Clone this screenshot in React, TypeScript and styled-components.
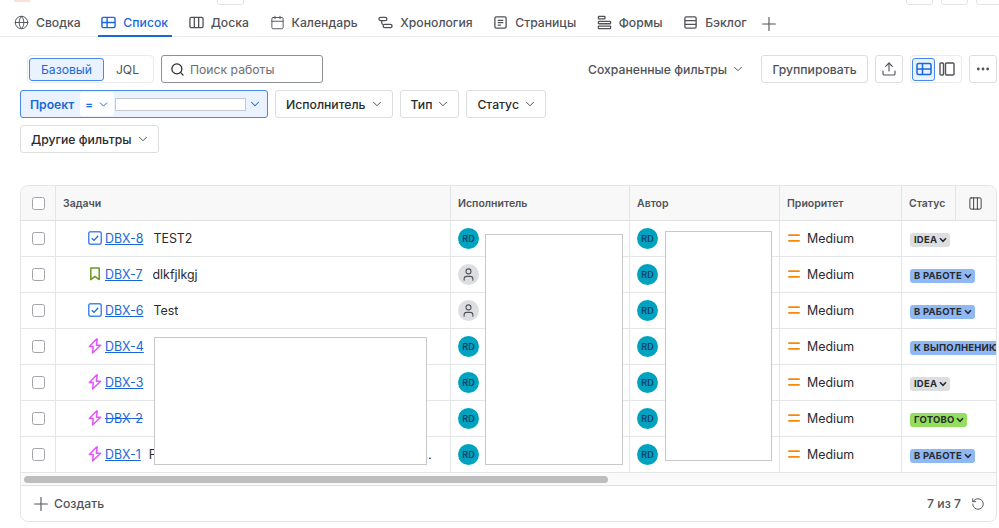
import React from "react";
import styled, { createGlobalStyle } from "styled-components";
import { ChevronDown, Columns3, Globe, Plus, RotateCcw, Search, Upload, User, Calendar, Ellipsis } from "lucide-react";

const GlobalStyle = createGlobalStyle`
  html, body { margin: 0; padding: 0; background: #fff; }
  body { font-family: Inter, "Noto Sans", sans-serif; color: #292a2e; overflow: hidden; }
  * { box-sizing: border-box; }
`;

const TableIcon = ({ size = 15 }: { size?: number }) => (
  <svg width={size} height={size} viewBox="0 0 16 16" fill="none" stroke="currentColor" strokeWidth="1.5">
    <rect x="1" y="2.5" width="14" height="11" rx="1.5" />
    <path d="M1 8h14M6.5 2.5v11" />
  </svg>
);
const BoardIcon = () => (
  <svg width="15" height="15" viewBox="0 0 16 16" fill="none" stroke="currentColor" strokeWidth="1.4">
    <rect x="1" y="2.5" width="14" height="11" rx="1.5" />
    <path d="M5.7 2.5v11M10.3 2.5v11" />
  </svg>
);
const TimelineIcon = () => (
  <svg width="15" height="15" viewBox="0 0 16 16" fill="none" stroke="currentColor" strokeWidth="1.4">
    <rect x="1" y="2.5" width="8.5" height="3.5" rx="1.7" />
    <rect x="5.5" y="10" width="9.5" height="3.5" rx="1.7" />
    <path d="M4 6v2.5a1.5 1.5 0 0 0 1.5 1.5" />
  </svg>
);
const PagesIcon = () => (
  <svg width="15" height="15" viewBox="0 0 16 16" fill="none" stroke="currentColor" strokeWidth="1.4">
    <rect x="2" y="2" width="12" height="12" rx="1.5" />
    <path d="M5 5.7h6M5 8.2h6M5 10.7h3.5" />
  </svg>
);
const FormsIcon = () => (
  <svg width="15" height="15" viewBox="0 0 16 16" fill="none" stroke="currentColor" strokeWidth="1.4">
    <rect x="1.5" y="1.5" width="7" height="2.6" rx=".6" />
    <rect x="1.5" y="6.7" width="13" height="2.6" rx=".6" />
    <rect x="1.5" y="11.9" width="13" height="2.6" rx=".6" />
  </svg>
);
const BacklogIcon = () => (
  <svg width="15" height="15" viewBox="0 0 16 16" fill="none" stroke="currentColor" strokeWidth="1.4">
    <rect x="2" y="2" width="12" height="12" rx="1.5" />
    <path d="M2 6h12M2 10h12" />
  </svg>
);
const PanelIcon = () => (
  <svg width="16" height="16" viewBox="0 0 16 16" fill="none" stroke="currentColor" strokeWidth="1.4">
    <rect x="1" y="2" width="3.5" height="12" rx="1" />
    <rect x="6.5" y="2" width="8.5" height="12" rx="1" />
  </svg>
);
const TaskIcon = () => (
  <svg width="14" height="14" viewBox="0 0 14 14" fill="none">
    <rect x=".75" y=".75" width="12.5" height="12.5" rx="2" stroke="#4688ec" strokeWidth="1.5" />
    <path d="M3.8 7.2l2.2 2.2 4.2-4.6" stroke="#1868db" strokeWidth="1.3" />
  </svg>
);
const StoryIcon = () => (
  <svg width="14" height="14" viewBox="0 0 14 14" fill="none">
    <path d="M2.8 1h8.4v11.6L7 9.4l-4.2 3.2z" stroke="#6a9a23" strokeWidth="1.5" strokeLinejoin="round" />
  </svg>
);
const EpicIcon = () => (
  <svg width="14" height="16" viewBox="0 0 14 16" fill="none">
    <path d="M8.6 1L1.4 8.6h3.8L4.6 15l8-7.8H8.4L9.2 1z" stroke="#e056f5" strokeWidth="1.5" strokeLinejoin="round" />
  </svg>
);
const MediumIcon = () => (
  <svg width="12" height="10" viewBox="0 0 12 10" fill="none">
    <path d="M.8 2.2h10.4M.8 7.8h10.4" stroke="#f68909" strokeWidth="1.7" strokeLinecap="round" />
  </svg>
);
const TinyChevron = () => (
  <svg width="8" height="6" viewBox="0 0 8 6" fill="none">
    <path d="M1 1.3l3 3 3-3" stroke="#292a2e" strokeWidth="1.6" />
  </svg>
);

const tabs = [
  { name: "Сводка", icon: <Globe size={15} strokeWidth={1.5} /> },
  { name: "Список", icon: <TableIcon />, active: true },
  { name: "Доска", icon: <BoardIcon /> },
  { name: "Календарь", icon: <Calendar size={15} strokeWidth={1.5} /> },
  { name: "Хронология", icon: <TimelineIcon /> },
  { name: "Страницы", icon: <PagesIcon /> },
  { name: "Формы", icon: <FormsIcon /> },
  { name: "Бэклог", icon: <BacklogIcon /> },
];

const statusColors: Record<string, string> = {
  idea: "#dddee1",
  progress: "#8fb8f6",
  done: "#94de5e",
};

const rows = [
  { key: "DBX-8", title: "TEST2", type: "task", assigned: true, status: "IDEA", tone: "idea" },
  { key: "DBX-7", title: "dlkfjlkgj", type: "story", assigned: false, status: "В РАБОТЕ", tone: "progress" },
  { key: "DBX-6", title: "Test", type: "task", assigned: false, status: "В РАБОТЕ", tone: "progress" },
  { key: "DBX-4", title: "", type: "epic", assigned: true, status: "К ВЫПОЛНЕНИЮ", tone: "progress" },
  { key: "DBX-3", title: "", type: "epic", assigned: true, status: "IDEA", tone: "idea" },
  { key: "DBX-2", title: "", type: "epic", assigned: true, status: "ГОТОВО", tone: "done", struck: true },
  { key: "DBX-1", title: "Реализовать загрузку данных из внешнего отчета", type: "epic", assigned: true, status: "В РАБОТЕ", tone: "progress", tight: true },
];

const typeIcons: Record<string, React.ReactNode> = {
  task: <TaskIcon />,
  story: <StoryIcon />,
  epic: <EpicIcon />,
};

export default function App() {
  return (
    <Page>
      <GlobalStyle />
      <TopStrip>
        <TopLogo />
        <TopGhost />
        <TopSpacer />
        <TopGhost />
        <TopGhost />
        <TopGhost />
      </TopStrip>

      <Tabs>
        {tabs.map((t) => (
          <Tab key={t.name} $active={t.active}>
            {t.icon}
            <span>{t.name}</span>
          </Tab>
        ))}
        <AddTab><Plus size={22} strokeWidth={1.2} /></AddTab>
      </Tabs>

      <Filters>
        <ToolRow>
          <Segment>
            <SegmentItem $active>Базовый</SegmentItem>
            <SegmentItem>JQL</SegmentItem>
          </Segment>
          <SearchBox>
            <Search size={15} strokeWidth={2} color="#292a2e" />
            <span>Поиск работы</span>
          </SearchBox>
          <Spacer />
          <SavedFilters>
            Сохраненные фильтры <ChevronDown size={14} strokeWidth={1.6} />
          </SavedFilters>
          <ToolButton $wide>Группировать</ToolButton>
          <ToolButton><Upload size={16} strokeWidth={1.7} /></ToolButton>
          <ViewSwitch>
            <ViewOption $active><TableIcon size={16} /></ViewOption>
            <ViewOption><PanelIcon /></ViewOption>
          </ViewSwitch>
          <ToolButton><Ellipsis size={16} strokeWidth={2.2} /></ToolButton>
        </ToolRow>

        <FilterRow>
          <ProjectFilter>
            <strong>Проект</strong>
            <Operator>= <ChevronDown size={13} strokeWidth={1.8} /></Operator>
            <ProjectValue />
            <ChevronDown size={14} strokeWidth={1.8} />
          </ProjectFilter>
          <FilterButton>Исполнитель <ChevronDown size={14} strokeWidth={1.7} /></FilterButton>
          <FilterButton>Тип <ChevronDown size={14} strokeWidth={1.7} /></FilterButton>
          <FilterButton>Статус <ChevronDown size={14} strokeWidth={1.7} /></FilterButton>
        </FilterRow>
        <FilterRow>
          <FilterButton>Другие фильтры <ChevronDown size={14} strokeWidth={1.7} /></FilterButton>
        </FilterRow>
      </Filters>

      <TableCard>
        <HeadRow>
          <HeadCell $center><CheckBox /></HeadCell>
          <HeadCell>Задачи</HeadCell>
          <HeadCell>Исполнитель</HeadCell>
          <HeadCell>Автор</HeadCell>
          <HeadCell>Приоритет</HeadCell>
          <StatusHead>
            <span>Статус</span>
            <ColumnsButton><Columns3 size={15} strokeWidth={1.4} /></ColumnsButton>
          </StatusHead>
        </HeadRow>

        {rows.map((r) => (
          <Row key={r.key}>
            <Cell $center><CheckBox /></Cell>
            <IssueCell>
              {typeIcons[r.type]}
              <IssueKey $struck={r.struck}>{r.key}</IssueKey>
              <IssueTitle $tight={r.tight}>{r.title}</IssueTitle>
            </IssueCell>
            <Cell>
              {r.assigned ? <Avatar>RD</Avatar> : <EmptyAvatar><User size={15} strokeWidth={1.7} /></EmptyAvatar>}
            </Cell>
            <Cell><Avatar>RD</Avatar></Cell>
            <PriorityCell><MediumIcon /> Medium</PriorityCell>
            <StatusCell>
              <StatusBadge $tone={r.tone}>{r.status} <TinyChevron /></StatusBadge>
            </StatusCell>
          </Row>
        ))}

        <ScrollTrack><ScrollThumb /></ScrollTrack>

        <Footer>
          <CreateButton><Plus size={22} strokeWidth={1.2} /> Создать</CreateButton>
          <Counter>7 из 7 <RotateCcw size={14} strokeWidth={1.6} /></Counter>
        </Footer>

        <TitleMask />
        <AssigneeMask />
        <AuthorMask />
      </TableCard>
    </Page>
  );
}

const Page = styled.div`
  width: 999px;
  height: 528px;
  overflow: hidden;
  font-size: 12.2px;
`;

const TopStrip = styled.div`
  height: 5px;
  display: flex;
  align-items: flex-end;
  padding-left: 217px;
  position: relative;
  overflow: hidden;
`;
const TopLogo = styled.div`
  position: absolute;
  left: 14px;
  top: -6px;
  width: 16px;
  height: 8px;
  background: #fde1d8;
`;
const TopGhost = styled.div`
  width: 27px;
  height: 20px;
  margin-right: 8px;
  border: 1px solid #e2e3e5;
  border-radius: 3px;
  flex: none;
`;
const TopSpacer = styled.div`
  width: 654px;
  flex: none;
`;

const Tabs = styled.nav`
  height: 32px;
  display: flex;
  padding-left: 11px;
  border-bottom: 1.5px solid #e9eaeb;
`;
const Tab = styled.div<{ $active?: boolean }>`
  height: 31.5px;
  padding: 6px 4px 0 3px;
  margin-right: 13.6px;
  display: flex;
  align-items: center;
  gap: 7px;
  font-weight: 500;
  color: ${(p) => (p.$active ? "#1868db" : "#505258")};
  border-bottom: ${(p) => (p.$active ? "2.5px solid #1868db" : "2.5px solid transparent")};
  & > svg { flex: none; }
`;
const AddTab = styled.div`
  display: flex;
  align-items: center;
  padding-top: 6px;
  color: #505258;
  margin-left: -6px;
`;

const Filters = styled.div`
  padding: 18px 2px 0 20px;
  display: flex;
  flex-direction: column;
  gap: 7px;
`;
const ToolRow = styled.div`
  height: 28px;
  padding-left: 7px;
  display: flex;
  align-items: center;
  gap: 7px;
`;
const Segment = styled.div`
  width: 127px;
  height: 28px;
  padding: 2px 2px 2px 1px;
  display: flex;
  align-items: center;
  border: 1px solid #e9eaeb;
  border-radius: 4px;
`;
const SegmentItem = styled.div<{ $active?: boolean }>`
  flex: ${(p) => (p.$active ? "0 0 75px" : "1")};
  height: 23px;
  display: flex;
  align-items: center;
  justify-content: center;
  border-radius: 3px;
  color: ${(p) => (p.$active ? "#1868db" : "#505258")};
  background: ${(p) => (p.$active ? "#e9f2fe" : "transparent")};
  border: ${(p) => (p.$active ? "1px solid #4688ec" : "0")};
`;
const SearchBox = styled.div`
  width: 162px;
  height: 28px;
  padding-left: 8px;
  display: flex;
  align-items: center;
  gap: 5px;
  color: #6b6e76;
  border: 1px solid #8c8f97;
  border-radius: 3px;
`;
const Spacer = styled.div`
  flex: 1;
`;
const SavedFilters = styled.div`
  display: flex;
  align-items: center;
  gap: 4px;
  margin-right: 9px;
  font-weight: 500;
  color: #505258;
  & > svg { flex: none; }
`;
const ToolButton = styled.div<{ $wide?: boolean }>`
  width: ${(p) => (p.$wide ? "107px" : "28px")};
  height: 28px;
  display: flex;
  align-items: center;
  justify-content: center;
  font-weight: 500;
  color: #505258;
  border: 1px solid #dcdddf;
  border-radius: 3px;
`;
const ViewSwitch = styled.div`
  width: 52px;
  height: 28px;
  padding: 2px 2px 2px 1px;
  display: flex;
  align-items: center;
  border: 1px solid #e9eaeb;
  border-radius: 4px;
`;
const ViewOption = styled.div<{ $active?: boolean }>`
  flex: ${(p) => (p.$active ? "0 0 23px" : "1")};
  height: 23px;
  display: flex;
  align-items: center;
  justify-content: center;
  border-radius: 3px;
  color: ${(p) => (p.$active ? "#1868db" : "#505258")};
  background: ${(p) => (p.$active ? "#e9f2fe" : "transparent")};
  border: ${(p) => (p.$active ? "1px solid #4688ec" : "0")};
`;

const FilterRow = styled.div`
  display: flex;
  gap: 7px;
`;
const FilterButton = styled.div`
  height: 28px;
  padding: 0 8px 0 10px;
  display: flex;
  align-items: center;
  gap: 4px;
  font-weight: 500;
  color: #292a2e;
  background: #fff;
  border: 1px solid #dcdddf;
  border-radius: 3px;
  & > svg { flex: none; color: #505258; }
`;
const ProjectFilter = styled.div`
  width: 248px;
  height: 28px;
  padding-left: 9px;
  display: flex;
  align-items: center;
  color: #1868db;
  background: #e9f2fe;
  border: 1px solid #4688ec;
  border-radius: 3px;
  & > strong { font-weight: 600; width: 50px; flex: none; }
  & > svg { flex: none; margin-left: 2px; }
`;
const Operator = styled.div`
  width: 34px;
  height: 24px;
  padding-left: 5px;
  display: flex;
  align-items: center;
  gap: 4px;
  font-weight: 500;
  background: #fff;
  border-radius: 3px;
  & > svg { flex: none; }
`;
const ProjectValue = styled.div`
  width: 131px;
  height: 13px;
  margin-left: 1px;
  background: #fff;
  border: 1px solid #c7c8cb;
`;

const TableCard = styled.div`
  position: relative;
  width: 977px;
  height: 337px;
  margin: 32px 0 0 20px;
  border: 1px solid #e4e5e7;
  border-radius: 8px;
  overflow: hidden;
`;
const columns = "35px 395px 179px 150px 122px 1fr";
const HeadRow = styled.div`
  height: 35px;
  display: grid;
  grid-template-columns: ${columns};
  background: #f8f8f8;
  border-bottom: 1px solid #dfe0e2;
`;
const Row = styled.div`
  height: 36px;
  display: grid;
  grid-template-columns: ${columns};
  border-bottom: 1px solid #e4e5e7;
`;
const HeadCell = styled.div<{ $center?: boolean }>`
  display: flex;
  align-items: center;
  justify-content: ${(p) => (p.$center ? "center" : "flex-start")};
  padding: ${(p) => (p.$center ? "0" : "0 7px")};
  font-size: 10.5px;
  font-weight: 600;
  color: #505258;
  border-right: 1px solid #e4e5e7;
`;
const StatusHead = styled.div`
  display: flex;
  align-items: center;
  padding-left: 7px;
  font-size: 10.5px;
  font-weight: 600;
  color: #505258;
  & > span { width: 46px; }
`;
const ColumnsButton = styled.div`
  width: 43px;
  align-self: stretch;
  display: flex;
  align-items: center;
  justify-content: center;
  margin-left: auto;
  color: #292a2e;
  border-left: 1px solid #e4e5e7;
  & > svg { margin-right: 3px; }
`;
const Cell = styled.div<{ $center?: boolean }>`
  min-width: 0;
  display: flex;
  align-items: center;
  justify-content: ${(p) => (p.$center ? "center" : "flex-start")};
  padding: ${(p) => (p.$center ? "0" : "0 7px")};
  border-right: 1px solid #e4e5e7;
`;
const IssueCell = styled(Cell)`
  padding: 0 18px 1px 32px;
  gap: 0;
  & > svg { flex: none; }
`;
const IssueKey = styled.span<{ $struck?: boolean }>`
  margin-left: 3px;
  font-size: 12.4px;
  color: #1868db;
  text-decoration: ${(p) => (p.$struck ? "line-through" : "underline")};
  white-space: nowrap;
`;
const IssueTitle = styled.span<{ $tight?: boolean }>`
  margin-left: ${(p) => (p.$tight ? "8px" : "10px")};
  font-size: 12.4px;
  color: #292a2e;
  white-space: nowrap;
  overflow: hidden;
  text-overflow: ellipsis;
`;
const PriorityCell = styled(Cell)`
  gap: 7px;
  font-size: 12.4px;
  padding: 0 0 1px 8px;
  color: #292a2e;
`;
const StatusCell = styled.div`
  min-width: 0;
  padding: 2px 0 0 8px;
  display: flex;
  align-items: center;
  overflow: hidden;
`;
const StatusBadge = styled.div<{ $tone: string }>`
  height: 14px;
  padding: 0 3px 0 4px;
  display: flex;
  align-items: center;
  gap: 2px;
  flex: none;
  font-size: 9.5px;
  font-weight: 700;
  letter-spacing: 0.2px;
  color: #292a2e;
  background: ${(p) => statusColors[p.$tone]};
  border-radius: 3px;
`;
const CheckBox = styled.div`
  width: 13px;
  height: 13px;
  border: 1.5px solid #a3a5aa;
  border-radius: 2.5px;
  background: #fff;
`;
const Avatar = styled.div`
  width: 21px;
  height: 21px;
  display: flex;
  align-items: center;
  justify-content: center;
  font-size: 9px;
  font-weight: 600;
  color: #12406b;
  background: #00a3bf;
  border-radius: 50%;
  flex: none;
`;
const EmptyAvatar = styled(Avatar)`
  color: #505258;
  background: #dddee1;
`;

const ScrollTrack = styled.div`
  height: 13px;
  padding: 3px 0 0 3px;
  background: #fafafa;
  border-bottom: 1px solid #dfe0e2;
`;
const ScrollThumb = styled.div`
  width: 584px;
  height: 7px;
  background: #bdbdbd;
  border-radius: 4px;
`;
const Footer = styled.div`
  height: 35px;
  padding: 0 11px 0 9px;
  display: flex;
  align-items: center;
  justify-content: space-between;
  color: #505258;
`;
const CreateButton = styled.div`
  display: flex;
  align-items: center;
  gap: 2px;
  font-weight: 500;
`;
const Counter = styled.div`
  display: flex;
  align-items: center;
  gap: 10px;
  font-weight: 500;
`;

const Mask = styled.div`
  position: absolute;
  background: #fff;
  border: 1px solid #c9c9c9;
`;
const TitleMask = styled(Mask)`
  left: 133px;
  top: 151px;
  width: 273px;
  height: 128px;
`;
const AssigneeMask = styled(Mask)`
  left: 464px;
  top: 48px;
  width: 138px;
  height: 231px;
`;
const AuthorMask = styled(Mask)`
  left: 644px;
  top: 45px;
  width: 107px;
  height: 230px;
`;
